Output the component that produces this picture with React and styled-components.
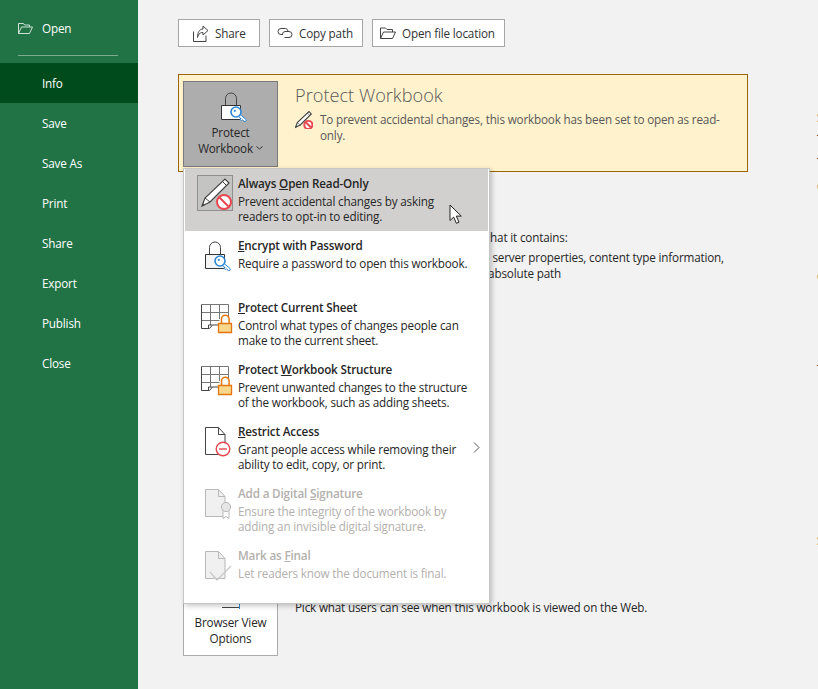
import React from 'react';
import styled, { createGlobalStyle } from 'styled-components';

const FONT = '"Open Sans", "Noto Sans", sans-serif';

const GlobalStyle = createGlobalStyle`
  html, body {
    margin: 0;
    overflow: hidden;
    background: #f2f2f2;
    font-family: ${FONT};
  }
`;

const Page = styled.div`
  position: relative;
  display: flex;
  width: 818px;
  height: 689px;
  overflow: hidden;
  background: #f2f2f2;
  font-size: 11.7px;
  letter-spacing: -0.17px;
  color: #262626;
`;

const Sidebar = styled.nav`
  flex: 0 0 138px;
  padding-top: 8px;
  box-sizing: border-box;
  background: #217346;
`;

const NavItem = styled.div`
  display: flex;
  align-items: center;
  height: 40px;
  padding-left: ${p => (p.$icon ? 18 : 42)}px;
  gap: 9px;
  color: #fff;
  background: ${p => (p.$active ? '#004b1c' : 'transparent')};
`;

const NavDivider = styled.div`
  height: 1px;
  width: 100px;
  margin: 7px 0 7px 18px;
  background: #7fab91;
`;

const Main = styled.main`
  display: flex;
  padding: 19px 0 0 40px;
`;

const Content = styled.div`
  flex: 0 0 570px;
  min-width: 0;
`;

const ButtonRow = styled.div`
  display: flex;
  gap: 9px;
`;

const ActionButton = styled.div`
  display: flex;
  align-items: center;
  box-sizing: border-box;
  width: ${p => p.$width}px;
  height: 28px;
  padding-left: ${p => p.$pad}px;
  gap: ${p => p.$gap}px;
  background: #fff;
  border: 1px solid #a6a6a6;
  color: #333;
`;

const Notice = styled.section`
  display: flex;
  box-sizing: border-box;
  height: 98px;
  margin-top: 27px;
  padding: 6px 0 0 4px;
  background: #fff2cc;
  border: 1px solid #9c6500;
`;

const BigButton = styled.div`
  flex: 0 0 95px;
  display: flex;
  flex-direction: column;
  align-items: center;
  box-sizing: border-box;
  height: 86px;
  padding-top: ${p => p.$top}px;
  background: ${p => (p.$pressed ? '#adadad' : '#fff')};
  border: 1px solid ${p => (p.$pressed ? '#7a7a7a' : '#ababab')};
  line-height: 16px;
  text-align: center;
  color: #262626;
`;

const ButtonIcon = styled.div`
  margin-bottom: ${p => p.$space}px;
`;

const DropLabel = styled.span`
  display: flex;
  align-items: center;
  gap: 3px;
`;

const NoticeBody = styled.div`
  margin-left: 17px;
  padding-top: 1px;
`;

const NoticeTitle = styled.div`
  font-size: 18.2px;
  font-weight: 300;
  letter-spacing: 0;
  line-height: 26px;
  color: #595959;
`;

const NoticeLine = styled.div`
  display: flex;
  gap: 7px;
  margin-top: 3px;
  line-height: 16px;
  color: #595959;
`;

const NoticeText = styled.div`
  width: 405px;
`;

const InspectBlock = styled.section`
  height: 60px;
  margin: 57px 0 0 117px;
  line-height: 16px;
`;

const Bullet = styled.div`
  width: 414px;
  margin: 4px 0 0 4px;
  padding-left: 17px;
`;

const BrowserSection = styled.section`
  display: flex;
  height: 86px;
  margin-top: 281px;
  padding-left: 5px;
`;

const BrowserText = styled.div`
  margin-left: 17px;
  padding-top: 29px;
  line-height: 16px;
`;

const PropColumn = styled.aside`
  flex: 0 0 auto;
  margin-left: 69px;
  white-space: nowrap;
`;

const PropLabel = styled.div`
  height: 16px;
  line-height: 16px;
  margin-top: ${p => p.$top}px;
`;

const Menu = styled.div`
  position: absolute;
  left: 183px;
  top: 168px;
  width: 307px;
  box-sizing: border-box;
  padding: 0 1px;
  background: #fff;
  border: 1px solid #c6c6c6;
  box-shadow: 2px 2px 5px rgba(0, 0, 0, 0.22);
`;

const MenuItem = styled.div`
  position: relative;
  display: flex;
  height: 62px;
  box-sizing: border-box;
  padding: 6px 0 0 12px;
  gap: 5px;
  background: ${p => (p.$hot ? '#d2d0ce' : 'transparent')};
  color: ${p => (p.$off ? '#b3b0ad' : '#262626')};
`;

const IconBox = styled.div`
  flex: 0 0 36px;
  display: flex;
  align-items: center;
  justify-content: center;
  height: 36px;
  box-sizing: border-box;
  background: ${p => (p.$hot ? '#c4c4c2' : 'transparent')};
  outline: ${p => (p.$hot ? '1px solid #8f8f8d' : 'none')};
  outline-offset: -1px;
`;

const MenuText = styled.div`
  margin-top: -1px;
`;

const MenuTitle = styled.div`
  font-weight: 600;
  line-height: 18px;
  color: ${p => (p.$off ? '#b3b0ad' : '#262626')};
`;

const MenuDesc = styled.div`
  line-height: 15px;
  margin-top: 2px;
  white-space: pre-line;
`;

const Caret = styled.svg`
  position: absolute;
  right: 8px;
  top: 25px;
`;

const Pointer = styled.svg`
  position: absolute;
  left: 449px;
  top: 204px;
`;

const InkIcon = styled.svg`
  display: block;
  flex: 0 0 auto;
`;

const OpenIcon = () => (
  <InkIcon width="15" height="12" viewBox="0 0 15 12" fill="none" stroke="#cfe0d6">
    <path d="M.5 11.5V1.5h5l1 1.5h5V5M.5 11.5h11l3-6.5H3.5z" />
  </InkIcon>
);

const ShareIcon = () => (
  <InkIcon width="16" height="17" viewBox="0 0 16 17" fill="none" stroke="#444">
    <path d="M.5 6.5v10h12.5v-6" />
    <path d="M10 1l5 4.5-5 4.5V7.5C7.5 7.500 5.500 8.500 4.500 12.500 4.500 7.500 6.500 4 10 4z" />
  </InkIcon>
);

const LinkIcon = () => (
  <InkIcon width="16" height="12" viewBox="0 0 16 12" fill="none" stroke="#444">
    <path d="M6 7.500H4A3 3 0 0 1 4 1.500h4.500A3 3 0 0 1 11 4" />
    <path d="M5.500 8A3 3 0 0 1 8 4.500h4a3 3 0 0 1 0 6H7.500" />
  </InkIcon>
);

const FolderIcon = () => (
  <InkIcon width="16" height="12" viewBox="0 0 16 12" fill="none" stroke="#444">
    <path d="M.5 11.500V1h5l1.500 1.500h5.500V5M.5 11.500h12l3-6.500H3.500z" />
  </InkIcon>
);

const LockKey = ({ body }) => (
  <InkIcon width="32" height="32" viewBox="0 0 32 32">
    <path d="M10.500 15V8.500a5.500 5.500 0 0 1 11 0V15" fill="none" stroke="#444" />
    <path d="M6.500 15.500h19v14h-19z" fill={body} stroke="#333" />
    <path d="M24 23.500l7.500 6.500-1.500 2-2.800-2.300-1 .9-1-1 .8-1-4-3.500z" fill="#fff" stroke="#2b88d8" />
    <circle cx="21" cy="22" r="5" fill="#fff" stroke="#2b88d8" strokeWidth="1.600" />
    <circle cx="19.800" cy="20.800" r="1.100" fill="#2b88d8" />
  </InkIcon>
);

const NoEdit = ({ small }) => (
  <InkIcon
    width={small ? 18 : 36}
    height={small ? 18 : 36}
    viewBox={small ? '4 3 31 31' : '0 0 36 36'}
  >
    <path d="M5 31l3-8L28 4l4 4-19 19z" fill="#fff" stroke="#444" strokeWidth={small ? 2 : 1.2} />
    <path d="M8 23l5 4M25.500 6.500l4 4" fill="none" stroke="#444" strokeWidth="1" />
    <path d="M5 31l1-3 2 2z" fill="#444" />
    <circle cx="27" cy="27" r="7" fill="#fff" stroke="#e8474f" strokeWidth={small ? 3.4 : 2} />
    <path d="M22.500 22.500l9 9" stroke="#e8474f" strokeWidth={small ? 3.4 : 2} />
  </InkIcon>
);

const SheetLock = () => (
  <InkIcon width="36" height="36" viewBox="0 0 36 36">
    <path d="M4.500 29.500V5.500h27v18h-9l-3 6z" fill="#fff" />
    <path d="M4.500 13.500h27M4.500 21.500h18M13.500 5.500V26M22.500 5.500V20" fill="none" stroke="#767676" />
    <path d="M4.500 5.500h27V18" fill="none" stroke="#767676" />
    <path d="M4.500 5.500v24h8l3-3.500h6" fill="none" stroke="#444" />
    <path d="M11.500 29.500v-3.500h4" fill="none" stroke="#444" />
    <path d="M24.500 24v-4a3.800 3.800 0 0 1 7.600 0v4" fill="none" stroke="#e3760f" strokeWidth="1.500" />
    <path d="M21.500 24.500h13v9h-13z" fill="#f9d78d" stroke="#e3760f" strokeWidth="1.300" />
  </InkIcon>
);

const PageShape = ({ stroke, fill }) => (
  <>
    <path d="M8.500 4.500h13l6.500 7v20h-19.500z" fill={fill} stroke={stroke} />
    <path d="M21.500 4.500v7h6.500" fill="none" stroke={stroke} />
  </>
);

const RestrictIcon = () => (
  <InkIcon width="36" height="36" viewBox="0 0 36 36">
    <PageShape stroke="#444" fill="#fff" />
    <circle cx="26" cy="26" r="6.800" fill="#fff" stroke="#e8474f" strokeWidth="1.400" />
    <path d="M22 26h8" stroke="#e8474f" strokeWidth="1.400" />
  </InkIcon>
);

const SignatureIcon = () => (
  <InkIcon width="36" height="36" viewBox="0 0 36 36">
    <PageShape stroke="#b8b8b8" fill="#f0f0f0" />
    <path d="M26 25v8.500l3-2 3 2V25" fill="#fff" stroke="#b8b8b8" />
    <circle cx="29" cy="22" r="4.600" fill="#e6e6e6" stroke="#b8b8b8" />
  </InkIcon>
);

const FinalIcon = () => (
  <InkIcon width="36" height="36" viewBox="0 0 36 36">
    <PageShape stroke="#b8b8b8" fill="#f0f0f0" />
    <path d="M13 25l7 8 14-14" fill="none" stroke="#c8c8c8" strokeWidth="1.300" />
  </InkIcon>
);

const BrowserIcon = () => (
  <InkIcon width="20" height="32" viewBox="0 0 20 32" fill="none" stroke="#444">
    <path d="M1 20.500h15M1 25.500h17" />
    <path d="M18.500 21v6" stroke="#2b88d8" />
  </InkIcon>
);

const DropChevron = () => (
  <svg width="7" height="4" viewBox="0 0 7 4" fill="none" stroke="#333">
    <path d="M.5.5l3 2.500 3-2.500" />
  </svg>
);

const MENU = [
  { key: 'read', hot: true, icon: <NoEdit />, title: <>Always <u>O</u>pen Read-Only</>, desc: 'Prevent accidental changes by asking\nreaders to opt-in to editing.' },
  { key: 'encrypt', icon: <LockKey body="#f5f5f5" />, title: <><u>E</u>ncrypt with Password</>, desc: 'Require a password to open this workbook.' },
  { key: 'sheet', icon: <SheetLock />, title: <><u>P</u>rotect Current Sheet</>, desc: 'Control what types of changes people can\nmake to the current sheet.' },
  { key: 'structure', icon: <SheetLock />, title: <>Protect <u>W</u>orkbook Structure</>, desc: 'Prevent unwanted changes to the structure\nof the workbook, such as adding sheets.' },
  { key: 'restrict', icon: <RestrictIcon />, caret: true, title: <><u>R</u>estrict Access</>, desc: 'Grant people access while removing their\nability to edit, copy, or print.' },
  { key: 'signature', off: true, icon: <SignatureIcon />, title: <>Add a Digital <u>S</u>ignature</>, desc: 'Ensure the integrity of the workbook by\nadding an invisible digital signature.' },
  { key: 'final', off: true, icon: <FinalIcon />, title: <>Mark as <u>F</u>inal</>, desc: 'Let readers know the document is final.' },
];

const NAV = ['Save', 'Save As', 'Print', 'Share', 'Export', 'Publish', 'Close'];

export default function App() {
  return (
    <Page>
      <GlobalStyle />
      <Sidebar>
        <NavItem $icon><OpenIcon />Open</NavItem>
        <NavDivider />
        <NavItem $active>Info</NavItem>
        {NAV.map(name => <NavItem key={name}>{name}</NavItem>)}
      </Sidebar>

      <Main>
        <Content>
          <ButtonRow>
            <ActionButton $width={82} $pad={14} $gap={6}><ShareIcon />Share</ActionButton>
            <ActionButton $width={94} $pad={7} $gap={6}><LinkIcon />Copy path</ActionButton>
            <ActionButton $width={133} $pad={7} $gap={6}><FolderIcon />Open file location</ActionButton>
          </ButtonRow>

          <Notice>
            <BigButton $pressed $top={8}>
              <ButtonIcon $space={2}><LockKey body="#fff" /></ButtonIcon>
              <span>Protect</span>
              <DropLabel>Workbook <DropChevron /></DropLabel>
            </BigButton>
            <NoticeBody>
              <NoticeTitle>Protect Workbook</NoticeTitle>
              <NoticeLine>
                <NoEdit small />
                <NoticeText>To prevent accidental changes, this workbook has been set to open as read-only.</NoticeText>
              </NoticeLine>
            </NoticeBody>
          </Notice>

          <InspectBlock>
            <div>Before publishing this file, be aware that it contains:</div>
            <Bullet>Document properties, document server properties, content type information, printer path, author's name and absolute path</Bullet>
          </InspectBlock>

          <BrowserSection>
            <BigButton $top={11}>
              <BrowserIcon />
              <span>Browser View</span>
              <span>Options</span>
            </BigButton>
            <BrowserText>Pick what users can see when this workbook is viewed on the Web.</BrowserText>
          </BrowserSection>
        </Content>

        <PropColumn>
          <PropLabel $top={90}>Size</PropLabel>
          <PropLabel $top={6}>Title</PropLabel>
          <PropLabel $top={7}>Tags</PropLabel>
          <PropLabel $top={8}>Categories</PropLabel>
          <PropLabel $top={74}>Comments</PropLabel>
          <PropLabel $top={77}>Template</PropLabel>
          <PropLabel $top={155}>Show All Properties</PropLabel>
        </PropColumn>
      </Main>

      <Menu>
        {MENU.map(item => (
          <MenuItem key={item.key} $hot={item.hot} $off={item.off}>
            <IconBox $hot={item.hot}>{item.icon}</IconBox>
            <MenuText>
              <MenuTitle $off={item.off}>{item.title}</MenuTitle>
              <MenuDesc>{item.desc}</MenuDesc>
            </MenuText>
            {item.caret && (
              <Caret width="7" height="11" viewBox="0 0 7 11" fill="none" stroke="#555">
                <path d="M1 .5l5 5-5 5" />
              </Caret>
            )}
          </MenuItem>
        ))}
      </Menu>

      <Pointer width="15" height="21" viewBox="0 0 15 21">
        <path d="M1 1v15.500l3.700-3.400 2.700 6.200 2.600-1.100-2.700-6.100h5z" fill="#fff" stroke="#222" />
      </Pointer>
    </Page>
  );
}
